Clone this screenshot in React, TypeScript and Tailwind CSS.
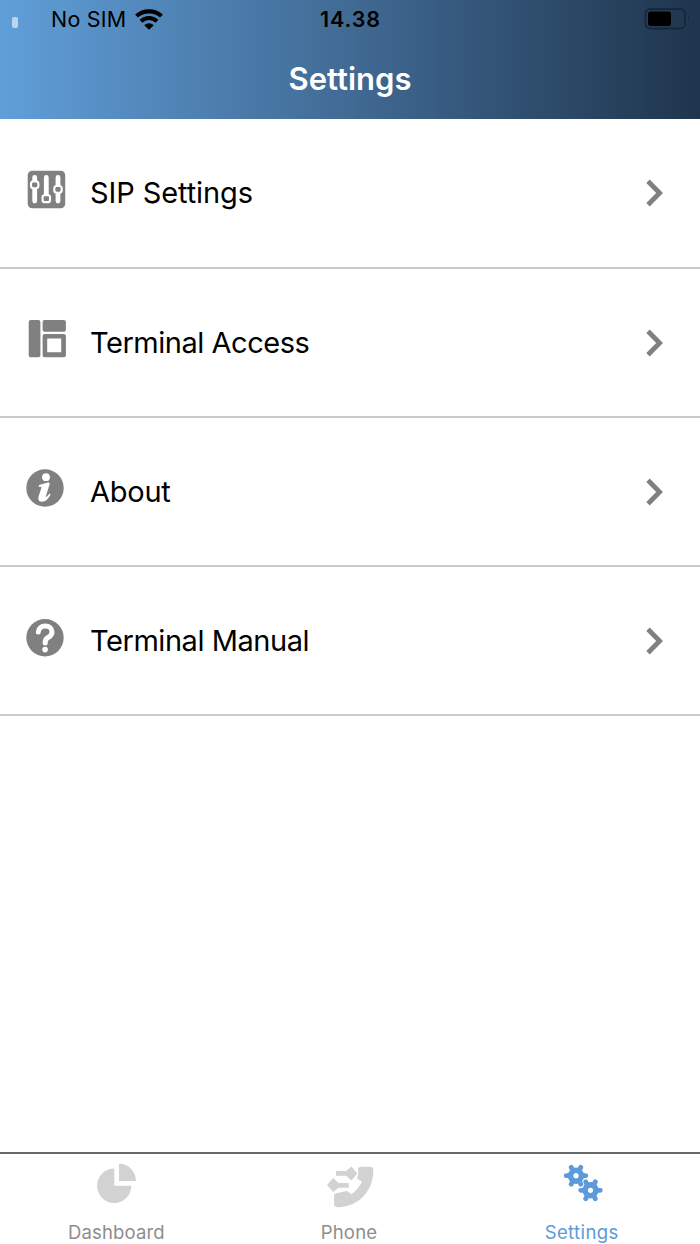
import React from "react";

type RowProps = {
  label: string;
  icon: React.ReactNode;
  className: string;
};

type TabProps = {
  label: string;
  icon: React.ReactNode;
  className: string;
};

const SlidersIcon = () => (
  <svg width="40" height="40" viewBox="0 0 40 40" fill="none">
    <rect x="1.7" y="0.8" width="37.5" height="37.5" rx="4.5" fill="#808080" />
    <path d="M8.700 7.500v23.500M20.300 7.500v20M32 7.500v23.500" stroke="#fff" strokeWidth="4.800" strokeLinecap="round" />
    <g fill="#808080" stroke="#fff" strokeWidth="2.1">
      <rect x="5" y="11.4" width="7.400" height="6.800" rx="2.500" />
      <rect x="16.600" y="25.300" width="7.400" height="6.800" rx="1.800" />
      <rect x="28.300" y="16" width="7.400" height="6.800" rx="2.500" />
    </g>
  </svg>
);

const LayoutIcon = () => (
  <svg width="40" height="40" viewBox="0 0 40 40" fill="#808080">
    <rect x="2.7" y="1" width="11.7" height="37.3" rx="2" />
    <rect x="16.6" y="1" width="23.3" height="11.7" rx="2" />
    <path
      fillRule="evenodd"
      d="M18.600 15h19.300a2 2 0 0 1 2 2v19.300a2 2 0 0 1-2 2H18.600a2 2 0 0 1-2-2V17a2 2 0 0 1 2-2Zm2.600 4.500v13.700h14V19.500Z"
    />
  </svg>
);

const InfoIcon = () => (
  <svg width="40" height="40" viewBox="0 0 40 40">
    <circle cx="19" cy="20" r="18.7" fill="#808080" />
    <circle cx="20" cy="9.2" r="3.9" fill="#fff" />
    <path
      d="M13 17l9-2.400Q24 14.200 23.600 16.200L20 28q-.3 1.200 1 .5l2.600-3 1 .8C22.800 30.800 19.500 33.800 16 33.800c-3.200 0-4.200-2-3.400-5.200l2.800-8.800q.2-1.200-1.200-1.100l-1.600.1Z"
      fill="#fff"
    />
  </svg>
);

const HelpIcon = () => (
  <svg width="40" height="40" viewBox="0 0 40 40" fill="none">
    <circle cx="19" cy="19.7" r="18.7" fill="#808080" />
    <path
      d="M12.300 14c.4-3.700 3.100-5.900 6.900-5.900 4 0 6.800 2.400 6.800 5.900 0 2.900-1.700 4.300-3.900 5.500-2.100 1.100-2.900 1.900-2.900 4.800v.8"
      stroke="#fff"
      strokeWidth="5"
      strokeLinecap="round"
    />
    <circle cx="19.1" cy="31.6" r="2.8" fill="#fff" />
  </svg>
);

const ChevronIcon = () => (
  <svg width="20" height="30" viewBox="0 0 20 30" fill="none">
    <path d="M3 3.200L14.600 15 3 26.800" stroke="#808080" strokeWidth="4.800" />
  </svg>
);

const PieIcon = () => (
  <svg width="44" height="44" viewBox="0 0 44 44" fill="#d2d2d2">
    <path d="M20.300 6.500v17.300h17A17.100 17.300 0 1 1 20.300 6.500Z" />
    <path d="M25 1.700a17 17.300 0 0 1 17 17.300H25Z" />
  </svg>
);

const TransferIcon = () => (
  <svg width="50" height="44" viewBox="0 0 50 44" fill="#d2d2d2" className="overflow-visible">
    <path d="M12 9h10l5.500-4.500 5.800 7-5.800 7L22 13.800H12Z" />
    <path d="M24.700 20.900h-10L9.200 16 3 23l6.200 7 5.500-4.300h10Z" />
    <path d="M34 6q1.500-1.200 4.500-1.200h7.300q3.500.1 3.500 3.200C49.500 28 36 44.500 14 45.200q-4 0-4-3.400v-7.500q0-2.700 3-3.200l8.800-1.800q2.200-.3 3.200.9l2.300 2c4.200-3 8.200-7.300 10.700-12.400l-3.700-2.300q-1.500-1-1-2.600l1-3Z" />
  </svg>
);

const Gear = ({ x, y }: { x: number; y: number }) => (
  <g transform={`translate(${x} ${y})`}>
    <circle r="5.4" strokeWidth="5.6" />
    <g strokeWidth="4.8" strokeLinecap="round">
      <path d="M7 0h2.800M-7 0h-2.800" />
      <path d="M7 0h2.800M-7 0h-2.800" transform="rotate(60)" />
      <path d="M7 0h2.800M-7 0h-2.800" transform="rotate(120)" />
    </g>
  </g>
);

const GearsIcon = () => (
  <svg width="44" height="44" viewBox="0 0 44 44" fill="none" stroke="#5c9ad9">
    <Gear x={16} y={13.7} />
    <Gear x={30.5} y={28.3} />
  </svg>
);

const Row = ({ label, icon, className }: RowProps) => (
  <li className="flex h-[149.2px] items-center border-b-2 border-[#cbcbcb] pt-px pr-[35px] pl-[26px]">
    <span className="-mt-[7px] shrink-0">{icon}</span>
    <span className={`ml-6 flex-1 text-[29px] leading-9 ${className}`}>{label}</span>
    <ChevronIcon />
  </li>
);

const Tab = ({ label, icon, className }: TabProps) => (
  <div className={`flex flex-1 flex-col items-center pt-2 text-[18.5px] ${className}`}>
    {icon}
    <span className="mt-[14px] leading-6">{label}</span>
  </div>
);

const StatusBar = () => (
  <div className="flex h-[38px] items-center text-black">
    <span className="mt-[7px] ml-3 h-[11px] w-[6px] rounded-[2px] bg-[#bdd6ee]" />
    <span className="ml-[33px] w-[84px] text-[21.5px] tracking-[0.2px] whitespace-nowrap">No SIM</span>
    <svg width="28" height="21" viewBox="0 0 28 21" fill="none" stroke="#000">
      <path d="M1.500 7C8.500.7 19.500.7 26.500 7M6 12.200c4.500-4.300 11.500-4.300 16 0" strokeWidth="4.200" />
      <path d="M9.200 16.200c2.800-2.700 6.800-2.700 9.600 0L14 20.700Z" fill="#000" stroke="none" />
    </svg>
    <span className="ml-[157px] text-[21.5px] font-semibold tracking-[0.9px]">14.38</span>
    <svg className="mr-[10px] mb-px ml-auto" width="46" height="22" viewBox="0 0 46 22" fill="none">
      <rect x="1.500" y="1" width="39.500" height="19.500" rx="4.500" stroke="#16283b" strokeWidth="1.800" />
      <rect x="4" y="3.500" width="23" height="14.500" rx="2.500" fill="#000" />
      <path d="M44 7.500q1.800 3 0 6.500Z" fill="#16283b" />
    </svg>
  </div>
);

const App = () => {
  return (
    <div className="flex h-[1244px] w-[700px] flex-col overflow-hidden bg-white font-['Inter','Liberation_Sans',sans-serif] text-black">
      <header className="h-[119.4px] bg-linear-to-r from-[#609fd9] via-[#416a94] to-[#1f354d]">
        <StatusBar />
        <h1 className="pt-[21px] text-center text-[31px] leading-10 font-semibold text-white">Settings</h1>
      </header>

      <ul className="flex-1">
        <Row label="SIP Settings" icon={<SlidersIcon />} className="tracking-[-0.1px]" />
        <Row label="Terminal Access" icon={<LayoutIcon />} className="tracking-[-0.47px]" />
        <Row label="About" icon={<InfoIcon />} className="tracking-[-0.25px]" />
        <Row label="Terminal Manual" icon={<HelpIcon />} className="tracking-[-0.45px]" />
      </ul>

      <nav className="flex h-[92px] border-t-2 border-[#696969] pr-[2px]">
        <Tab label="Dashboard" icon={<PieIcon />} className="tracking-[0.15px] text-[#8d8d8d]" />
        <Tab label="Phone" icon={<TransferIcon />} className="tracking-[0.2px] text-[#8d8d8d]" />
        <Tab label="Settings" icon={<GearsIcon />} className="tracking-[0.4px] text-[#5c9ad9]" />
      </nav>
    </div>
  );
};

export default App;
